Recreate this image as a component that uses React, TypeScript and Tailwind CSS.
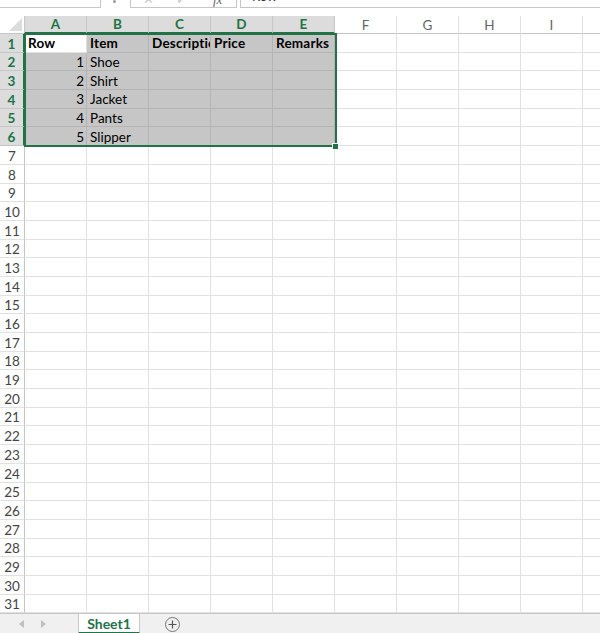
import React from "react";

const COLS = ["A", "B", "C", "D", "E", "F", "G", "H", "I"];

type Cell = { t: string; bold?: boolean; right?: boolean };

const DATA: Cell[][] = [
  [
    { t: "Row", bold: true },
    { t: "Item", bold: true },
    { t: "Description", bold: true },
    { t: "Price", bold: true },
    { t: "Remarks", bold: true },
  ],
  [{ t: "1", right: true }, { t: "Shoe" }],
  [{ t: "2", right: true }, { t: "Shirt" }],
  [{ t: "3", right: true }, { t: "Jacket" }],
  [{ t: "4", right: true }, { t: "Pants" }],
  [{ t: "5", right: true }, { t: "Slipper" }],
];

function TopBar() {
  return (
    <div className="flex h-[16px] items-start">
      <div className="h-[8px] w-[101px] border-b border-r border-[#c6c6c6] bg-white" />
      <div className="ml-[12px] mt-0 h-[3px] w-[3px] rounded-full bg-[#9a9a9a]" />
      <div className="ml-[14px] flex h-[8px] w-[107px] items-end overflow-hidden border-x border-b border-[#c6c6c6] bg-white">
        <span className="ml-[12px] mb-[1px] text-[13px] leading-none text-[#c8c8c8]">✕</span>
        <span className="ml-[22px] mb-[1px] text-[13px] leading-none text-[#c8c8c8]">✓</span>
        <span className="ml-[26px] mb-[1px] font-['Liberation_Serif',serif] text-[13px] italic leading-none text-[#666]">fx</span>
      </div>
      <div className="ml-[3px] flex h-[8px] flex-1 items-end overflow-hidden border-b border-l border-[#c6c6c6] bg-white">
        <span className="mb-[4px] ml-[11px] text-[13px] leading-none text-[#333]">Row</span>
      </div>
    </div>
  );
}

function Grid() {
  const rows = Array.from({ length: 31 }, (_, i) => i + 1);
  return (
    <div className="relative grid grid-cols-[25px_repeat(9,62px)_17px] grid-rows-[18px_repeat(31,18.7px)]">
      {/* corner */}
      <div className="relative border-b border-r border-[#c6c6c6] bg-white">
        <div className="absolute bottom-[2px] right-[2px] h-0 w-0 border-b-[13px] border-l-[13px] border-b-[#dcdcdc] border-l-transparent" />
      </div>
      {COLS.map((c, i) => {
        const sel = i < 5;
        return (
          <div
            key={c}
            className={
              sel
                ? "flex items-center justify-center border-b-2 border-r border-b-[#217346] border-r-[#c6c6c6] bg-[#dcdcdc] pt-[1px] text-[13.5px] font-bold text-[#217346]"
                : "flex items-center justify-center border-b border-r border-b-[#c6c6c6] border-r-[#e1e1e1] bg-white pt-[1px] text-[13.5px] text-[#666]"
            }
          >
            {c}
          </div>
        );
      })}
      <div className="border-b border-[#c6c6c6] bg-white" />

      {rows.map((r) => {
        const selRow = r <= 6;
        const data = DATA[r - 1];
        return (
          <React.Fragment key={r}>
            <div
              className={
                selRow
                  ? "flex items-center justify-center border-b border-r-2 border-b-[#c6c6c6] border-r-[#217346] bg-[#dcdcdc] pt-[2px] text-[13.5px] font-bold text-[#217346]"
                  : "flex items-center justify-center border-b border-r border-b-[#e1e1e1] border-r-[#c6c6c6] bg-white pt-[2px] text-[13.5px] text-[#444]"
              }
            >
              {r}
            </div>
            {COLS.map((c, ci) => {
              const selCell = selRow && ci < 5;
              const active = r === 1 && ci === 0;
              const cell = data ? data[ci] : undefined;
              let cls = "flex items-end overflow-hidden whitespace-nowrap border-b border-r text-[13.5px] leading-none text-black ";
              if (active) cls += "bg-white border-[#e1e1e1] ";
              else if (selCell) cls += "bg-[#c6c6c6] border-[#b4b4b4] ";
              else cls += "bg-white border-[#e1e1e1] ";
              if (cell?.right) cls += "justify-end pr-[2px] ";
              else cls += "pl-[3px] ";
              if (cell?.bold) cls += "font-bold tracking-[0.2px] ";
              return (
                <div key={c} className={cls}>
                  {cell ? <span className="mb-[1px]">{cell.t}</span> : null}
                </div>
              );
            })}
            <div className="border-b border-[#e1e1e1] bg-white" />
          </React.Fragment>
        );
      })}

      {/* selection outline */}
      <div className="pointer-events-none absolute left-[24px] top-[17px] h-[114px] w-[313px] border-2 border-[#217346]" />
      {/* fill handle */}
      <div className="pointer-events-none absolute left-[332px] top-[127px] h-[7px] w-[7px] border border-white bg-[#217346]" />
    </div>
  );
}

function TabBar() {
  return (
    <div className="flex h-[21px] items-stretch border-t border-[#c6c6c6] bg-[#f0f0f0]">
      <div className="flex w-[78px] items-center">
        <span className="ml-[19px] h-0 w-0 border-y-[4px] border-r-[5px] border-y-transparent border-r-[#c0c0c0]" />
        <span className="ml-[17px] h-0 w-0 border-y-[4px] border-l-[5px] border-y-transparent border-l-[#c0c0c0]" />
      </div>
      <div className="flex w-[62px] items-center justify-center border-x border-b-2 border-x-[#c6c6c6] border-b-[#217346] bg-white text-[14px] font-bold text-[#217346]">
        Sheet1
      </div>
      <div className="ml-[25px] flex items-center">
        <div className="flex h-[15px] w-[15px] items-center justify-center rounded-full border border-[#777]">
          <svg width="9" height="9" viewBox="0 0 9 9">
            <path d="M4.5 0.5v8M0.5 4.5h8" stroke="#555" strokeWidth="1.2" />
          </svg>
        </div>
      </div>
    </div>
  );
}

export default function App() {
  return (
    <div className="h-[633px] w-[600px] overflow-hidden bg-white font-['Lato',sans-serif]">
      <TopBar />
      <Grid />
      <TabBar />
    </div>
  );
}
